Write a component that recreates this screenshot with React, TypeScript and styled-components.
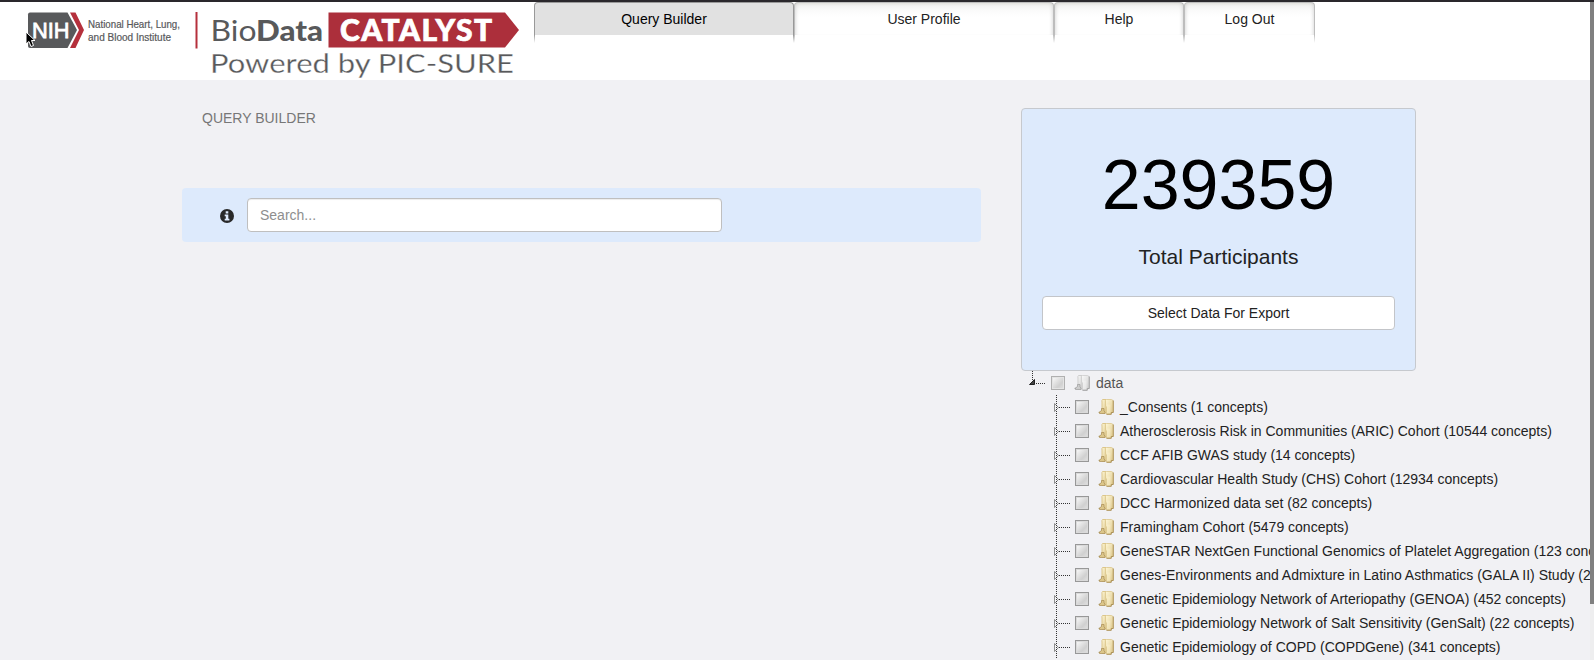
import React from "react";
import styled, { createGlobalStyle, css } from "styled-components";

const GlobalStyle = createGlobalStyle`
  *, *::before, *::after { box-sizing: border-box; }
  html, body { margin: 0; padding: 0; }
  body {
    background: #f1f1f4;
    color: #222;
    font-family: "Liberation Sans", Arial, Helvetica, sans-serif;
    font-size: 14px;
    line-height: 20px;
    overflow: hidden;
  }
`;

const Screen = styled.div`
  position: relative;
  width: 1594px;
  height: 660px;
  overflow: hidden;
  background: #f1f1f4;
`;

const Header = styled.header`
  display: flex;
  height: 80px;
  background: #fff;
  border-top: 2px solid #2a282c;
`;

const Brand = styled.div`
  width: 534px;
  height: 78px;
  flex: none;
`;

const Nav = styled.nav`
  display: flex;
`;

const Tab = styled.div<{ $width: number; $active?: boolean }>`
  --edge: ${(p) => (p.$active ? "#999" : "#bdbdbd")};
  width: ${(p) => p.$width}px;
  color: ${(p) => (p.$active ? "#000" : "#222")};
`;

const TabFace = styled.div<{ $active?: boolean }>`
  height: 33px;
  padding-top: 6px;
  text-align: center;
  border: 1px solid var(--edge);
  border-bottom: 0;
  border-radius: 4px 4px 0 0;
  ${(p) =>
    p.$active
      ? css`
          background: #e1e1e1;
        `
      : css`
          background: linear-gradient(#e2e2de, #f3f3f2 3px, #fbfbfb 8px, #fff 14px, #fff 31px, #fbfbfb);
          box-shadow: inset 4px 0 4px -4px #ccc, inset -4px 0 4px -4px #ccc;
        `}
`;

const TabTail = styled.div`
  height: 8px;
  background:
    linear-gradient(var(--edge), #fff) left / 1px 100% no-repeat,
    linear-gradient(var(--edge), #fff) right / 1px 100% no-repeat;
`;

const Main = styled.main`
  display: flex;
  align-items: flex-start;
  padding: 28px 0 0 182px;
`;

const QueryColumn = styled.section`
  width: 799px;
  margin-right: 40px;
  flex: none;
`;

const Title = styled.h1`
  margin: 0;
  padding-left: 20px;
  height: 80px;
  font-size: 14px;
  line-height: 20px;
  font-weight: 400;
  color: #777;
`;

const SearchPanel = styled.div`
  display: flex;
  align-items: center;
  height: 54px;
  padding-left: 38px;
  border-radius: 4px;
  background: #ddeafc;
`;

const InfoIcon = styled.svg`
  width: 14px;
  height: 14px;
  margin: 1px 13px 0 0;
  flex: none;
`;

const SearchInput = styled.input`
  width: 475px;
  height: 34px;
  padding: 0 12px;
  border: 1px solid #bfbfbf;
  border-radius: 4px;
  background: #fff;
  font: inherit;
  box-shadow: inset 0 1px 1px rgba(0, 0, 0, 0.075);
  &::placeholder { color: #8e8e8e; opacity: 1; }
`;

const ResultColumn = styled.aside`
  width: 573px;
  flex: none;
`;

const Card = styled.div`
  display: flex;
  flex-direction: column;
  align-items: center;
  width: 395px;
  height: 263px;
  padding: 36px 20px 0;
  border: 1px solid #c6c9ce;
  border-radius: 4px;
  background: #ddeafc;
`;

const Count = styled.div`
  height: 80px;
  font-size: 70px;
  line-height: 80px;
  color: #000;
`;

const CountLabel = styled.div`
  margin-top: 20px;
  height: 24px;
  font-size: 21px;
  line-height: 24px;
`;

const ExportButton = styled.button`
  align-self: stretch;
  height: 34px;
  margin-top: 27px;
  padding: 0;
  border: 1px solid #c3c5c9;
  border-radius: 4px;
  background: #fff;
  color: #222;
  font: inherit;
`;

const Tree = styled.div`
  padding-left: 8px;
`;

const Row = styled.div<{ $child?: boolean }>`
  display: flex;
  align-items: center;
  height: 24px;
  padding-left: ${(p) => (p.$child ? 24 : 0)}px;
  color: ${(p) => (p.$child ? "#222" : "#555")};
  white-space: nowrap;
`;

const Branch = styled.svg`
  width: 22px;
  height: 24px;
  flex: none;
`;

const Checkbox = styled.span<{ $muted?: boolean }>`
  width: 14px;
  height: 14px;
  flex: none;
  border: 1px solid ${(p) => (p.$muted ? "#b0b0b0" : "#989898")};
  background: linear-gradient(135deg, #f2f2f2 15%, #d0d0d0 65%, #e2e2e2);
  box-shadow: inset 0 0 0 1px ${(p) => (p.$muted ? "#e4e4e4" : "#dadada")};
`;

const Folder = styled.svg`
  width: 16px;
  height: 16px;
  margin: 0 6px 0 9px;
  flex: none;
`;

const ScrollTrack = styled.div`
  position: absolute;
  top: 2px;
  right: 0;
  width: 4px;
  height: 658px;
  background: #eeeeef;
`;

const ScrollThumb = styled.div`
  height: 602px;
  background: #808080;
`;

const Cursor = styled.svg`
  position: absolute;
  left: 25px;
  top: 31px;
  width: 11px;
  height: 17px;
`;

const studies = [
  "_Consents (1 concepts)",
  "Atherosclerosis Risk in Communities (ARIC) Cohort (10544 concepts)",
  "CCF AFIB GWAS study (14 concepts)",
  "Cardiovascular Health Study (CHS) Cohort (12934 concepts)",
  "DCC Harmonized data set (82 concepts)",
  "Framingham Cohort (5479 concepts)",
  "GeneSTAR NextGen Functional Genomics of Platelet Aggregation (123 concepts)",
  "Genes-Environments and Admixture in Latino Asthmatics (GALA II) Study (22 concepts)",
  "Genetic Epidemiology Network of Arteriopathy (GENOA) (452 concepts)",
  "Genetic Epidemiology Network of Salt Sensitivity (GenSalt) (22 concepts)",
  "Genetic Epidemiology of COPD (COPDGene) (341 concepts)",
];

const tabs = [
  { label: "Query Builder", width: 260, active: true },
  { label: "User Profile", width: 260 },
  { label: "Help", width: 130 },
  { label: "Log Out", width: 131 },
];

const Logo = () => (
  <svg width="534" height="78" viewBox="0 2 534 78" fontFamily="Lato, sans-serif" fill="#58595b">
    <path d="M30 12.5H67.500L77 30L67.500 48H30Q28 48 28 46V14.500Q28 12.500 30 12.500Z" />
    <path d="M70 12.500H75.500L84 30L75.500 48H70L79 30Z" fill="#b5303c" />
    <text x="32" y="38" fontFamily="Liberation Sans, Arial, sans-serif" fontSize="22.500" fill="#fff" stroke="#fff" strokeWidth="0.800" textLength="37.500" lengthAdjust="spacingAndGlyphs">NIH</text>
    <g fontFamily="Liberation Sans, Arial, sans-serif" fontSize="10.200" stroke="#58595b" strokeWidth="0.200">
      <text x="88" y="28" textLength="92" lengthAdjust="spacingAndGlyphs">National Heart, Lung,</text>
      <text x="88" y="40.500" textLength="83" lengthAdjust="spacingAndGlyphs">and Blood Institute</text>
    </g>
    <rect x="195.500" y="12" width="2" height="36.500" fill="#b5303c" />
    <text x="210.500" y="41" fontSize="29" textLength="46" lengthAdjust="spacingAndGlyphs">Bio</text>
    <text x="256" y="41" fontSize="29" fontWeight="900" textLength="67" lengthAdjust="spacingAndGlyphs">Data</text>
    <path d="M328.500 12.500H505L519 30L505 47.500H328.500Z" fill="#ac2f3b" />
    <text x="340" y="41" fontSize="30" fontWeight="900" fill="#fff" stroke="#fff" strokeWidth="0.700" textLength="152" lengthAdjust="spacing">CATALYST</text>
    <text x="210" y="72.500" fontSize="27.500" fontWeight="400" stroke="#fff" strokeWidth="0.300" textLength="304" lengthAdjust="spacingAndGlyphs">Powered by PIC-SURE</text>
  </svg>
);

const FolderIcon = ({ muted }: { muted?: boolean }) => {
  const [light, mid, dark] = muted ? ["#fafafa", "#cdcdcd", "#9c9c9c"] : ["#fff8d8", "#dcc68a", "#a78b50"];
  const id = muted ? "folderMuted" : "folder";
  return (
    <Folder viewBox="0 0 16 16">
      <defs>
        <linearGradient id={id} x1="0" y1="0" x2="1" y2="1">
          <stop offset="0" stopColor={light} />
          <stop offset="1" stopColor={mid} />
        </linearGradient>
      </defs>
      <path d="M0 14L1 12.500H3V14Z" fill={muted ? "#bbb" : "#c9c0a4"} />
      <path d="M4.500 .5H8V14H4V3Q3.500 1.500 4.500 .5Z" fill={`url(#${id})`} stroke={mid} />
      <path d="M3.500 9.500H6V12L7 13V14.500H1.500V13L3.500 11.500Z" fill={mid} stroke={dark} strokeWidth=".7" />
      <path d="M7.500 1.500L8.500 .5H13.500L15 1.500V13.500H13V15H8.500V8L7.500 7Z" fill={`url(#${id})`} stroke={mid} strokeWidth=".8" />
      <path d="M9 5.500V14.500H12.500V5.500Z" fill={light} opacity=".4" />
      <path d="M15.300 1.500V13.500H13.300V15.300H8.500" fill="none" stroke={dark} strokeWidth=".9" />
    </Folder>
  );
};

const ChildBranch = () => (
  <Branch viewBox="0 0 22 24" shapeRendering="crispEdges">
    <path d="M3.500 0V24" stroke="#333" strokeDasharray="1 1" />
    <path d="M6 12.500H17" stroke="#333" strokeDasharray="1 1" />
    <path d="M1.500 8.500V16.500L5.500 12.500Z" fill="#f5f5f7" stroke="#909090" shapeRendering="auto" />
    <path d="M3.500 10V15" stroke="#333" strokeDasharray="1 1" />
  </Branch>
);

const RootBranch = () => (
  <Branch viewBox="0 0 22 24" shapeRendering="crispEdges">
    <path d="M3.500 0V9" stroke="#333" strokeDasharray="1 1" />
    <path d="M7 12.500H17" stroke="#333" strokeDasharray="1 1" />
    <path d="M.5 13.500L5.500 8.500V13.500Z" fill="#444" stroke="#222" shapeRendering="auto" />
  </Branch>
);

export default function App() {
  return (
    <Screen>
      <GlobalStyle />
      <Header>
        <Brand>
          <Logo />
        </Brand>
        <Nav>
          {tabs.map((t) => (
            <Tab key={t.label} $width={t.width} $active={t.active}>
              <TabFace $active={t.active}>{t.label}</TabFace>
              <TabTail />
            </Tab>
          ))}
        </Nav>
      </Header>
      <Main>
        <QueryColumn>
          <Title>QUERY BUILDER</Title>
          <SearchPanel>
            <InfoIcon viewBox="0 0 14 14">
              <circle cx="7" cy="7" r="7" fill="#292929" />
              <path d="M5.700 2.200H8.300V4.400H5.700ZM4.700 5.600H8.300V9.800H9.400V11.500H4.700V9.800H5.800V7.300H4.700Z" fill="#dfebfc" />
            </InfoIcon>
            <SearchInput placeholder="Search..." />
          </SearchPanel>
        </QueryColumn>
        <ResultColumn>
          <Card>
            <Count>239359</Count>
            <CountLabel>Total Participants</CountLabel>
            <ExportButton>Select Data For Export</ExportButton>
          </Card>
          <Tree>
            <Row>
              <RootBranch />
              <Checkbox $muted />
              <FolderIcon muted />
              data
            </Row>
            {studies.map((s) => (
              <Row key={s} $child>
                <ChildBranch />
                <Checkbox />
                <FolderIcon />
                {s}
              </Row>
            ))}
          </Tree>
        </ResultColumn>
      </Main>
      <ScrollTrack>
        <ScrollThumb />
      </ScrollTrack>
      <Cursor viewBox="0 0 11 17">
        <path d="M1 1V13L4 10.500L6 15.500L8.500 14.500L6.500 9.500H10Z" fill="#000" stroke="#fff" strokeWidth="1" />
      </Cursor>
    </Screen>
  );
}
